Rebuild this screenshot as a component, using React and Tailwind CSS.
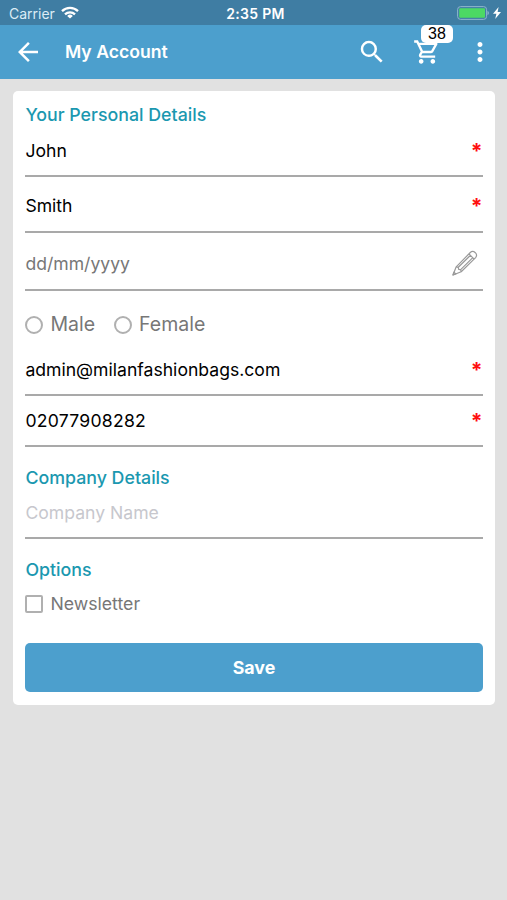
import { MdArrowBack, MdMoreVert, MdOutlineShoppingCart, MdSearch } from "react-icons/md";

const StatusBar = () => {
  return (
    <div className="h-[25px] bg-[#3f7da3] text-white grid grid-cols-3 items-center pl-[9px] pr-[6px] pt-[2px]">
      <div className="flex items-center gap-[6px] text-[14px] leading-5 text-[#dcecf5]">
        <span>Carrier</span>
        <svg className="w-[18px] h-[13px] -mt-[2px]" viewBox="0 0 18 13" fill="none" stroke="white" strokeWidth="2.3">
          <path d="M1 5.2a11.5 11.5 0 0 1 16 0" />
          <path d="M4 8.3a7.2 7.2 0 0 1 10 0" />
          <path d="M9 12.6 6.2 9.9a4 4 0 0 1 5.6 0z" fill="white" stroke="none" />
        </svg>
      </div>
      <span className="pl-px text-center text-[14px] leading-5 tracking-[0.3px] font-semibold whitespace-nowrap">
        2:35 PM
      </span>
      <div className="flex items-center justify-end gap-[4px] -mt-[2px]">
        <svg className="w-[32px] h-[14px]" viewBox="0 0 32 14">
          <rect x="0.6" y="0.6" width="29" height="12.8" rx="3" fill="none" stroke="#8fb5cd" strokeWidth="1" />
          <rect x="2.2" y="2.2" width="25.8" height="9.6" rx="1" fill="#4cd964" />
          <path d="M30.5 5v4c1-.4 1.400-1.200 1.400-2S31.500 5.400 30.500 5z" fill="#8fb5cd" />
        </svg>
        <svg className="w-[8px] h-[12px]" viewBox="0 0 8 12" fill="white">
          <path d="M5.600 0 0 6.800h3.400L2.200 12 8 5H4.600z" />
        </svg>
      </div>
    </div>
  );
};

const Header = () => {
  return (
    <header className="h-[54px] bg-[#4c9fcd] text-white flex items-center pl-[13px] pr-[12px]">
      <MdArrowBack className="w-[30px] h-[30px]" />
      <h1 className="ml-[22px] pt-px text-[17.6px] font-semibold">My Account</h1>
      <MdSearch className="ml-auto w-[30px] h-[30px]" />
      <div className="relative ml-[26px]">
        <MdOutlineShoppingCart className="w-[28px] h-[28px]" />
        <span className="absolute left-[8px] -top-[13px] w-[32px] h-[18px] rounded-[5px] bg-white text-black font-['Liberation_Sans',sans-serif] text-[16px] leading-[18px] text-center">
          38
        </span>
      </div>
      <MdMoreVert className="ml-[24px] w-[30px] h-[30px]" />
    </header>
  );
};

const SectionTitle = ({ children }) => {
  return <h2 className="h-6 leading-6 text-[17.8px] font-medium text-[#1b98b0]">{children}</h2>;
};

const Field = ({ className, required, icon, children }) => {
  return (
    <div className={`flex items-center justify-between border-b-2 border-[#a9a9a9] text-[17.6px] ${className}`}>
      <span>{children}</span>
      {required && <span className="text-[21px] leading-5 h-[19px] font-bold text-[#ff1010]">*</span>}
      {icon}
    </div>
  );
};

const PencilIcon = () => {
  return (
    <svg
      className="w-[26px] h-[26px] mr-[5px] -mt-[2px]"
      viewBox="0 0 26 26"
      fill="none"
      stroke="#999"
      strokeWidth="1.200"
      strokeLinejoin="round"
    >
      <path d="M1 25 4.200 16.800 18.300 2.500Q20.600.3 23.300 2.700Q25.700 5.200 23.600 7.600L9.200 21.800z" />
      <path d="M4.200 16.800 6.300 17.300 6.700 19.300 8.700 19.700 9.200 21.800M17 4 22.200 9.200M6.300 17.300 18.500 5.300M8.700 19.700 20.800 7.600M1 25 1.900 22.200 3.800 24z" />
    </svg>
  );
};

const Radio = ({ children }) => {
  return (
    <label className="flex items-center gap-[7px]">
      <span className="w-[18px] h-[18px] rounded-full border-2 border-[#b0b0b0]" />
      {children}
    </label>
  );
};

const App = () => {
  return (
    <div className="w-full h-screen bg-[#e1e1e1] font-[Inter,sans-serif]">
      <StatusBar />
      <Header />
      <main className="mt-3 ml-[13px] mr-3 h-[614px] rounded-[5px] bg-white pt-3 pl-[12.4px] pr-[12.4px]">
        <SectionTitle>Your Personal Details</SectionTitle>
        <Field className="h-[50px] text-black" required>John</Field>
        <Field className="h-14 pt-[5px] text-black" required>Smith</Field>
        <Field className="h-[58px] pt-[6px] text-[#777]" icon={<PencilIcon />}>dd/mm/yyyy</Field>
        <div className="h-[66px] pt-px flex items-center gap-[19px] text-[19.5px] text-[#777]">
          <Radio>Male</Radio>
          <Radio>Female</Radio>
        </div>
        <Field className="h-[39px] pb-[10px] text-black" required>admin@milanfashionbags.com</Field>
        <Field className="h-[51px] pt-[2px] text-black" required>
          <span className="tracking-[0.25px]">02077908282</span>
        </Field>

        <div className="mt-[19px]">
          <SectionTitle>Company Details</SectionTitle>
          <Field className="h-[49px] text-[#c7c7cd]">Company Name</Field>
        </div>

        <div className="mt-[19px]">
          <SectionTitle>Options</SectionTitle>
          <label className="mt-[10px] flex items-center gap-[7px] h-6 text-[17.7px] text-[#777]">
            <span className="w-[18px] h-[18px] rounded-[2px] border-2 border-[#b0b0b0]" />
            Newsletter
          </label>
        </div>

        <button className="mt-[27px] pt-px w-full h-[49px] rounded-[5px] bg-[#4c9fcd] text-white text-[17.8px] font-bold">
          Save
        </button>
      </main>
    </div>
  );
};

export default App;
